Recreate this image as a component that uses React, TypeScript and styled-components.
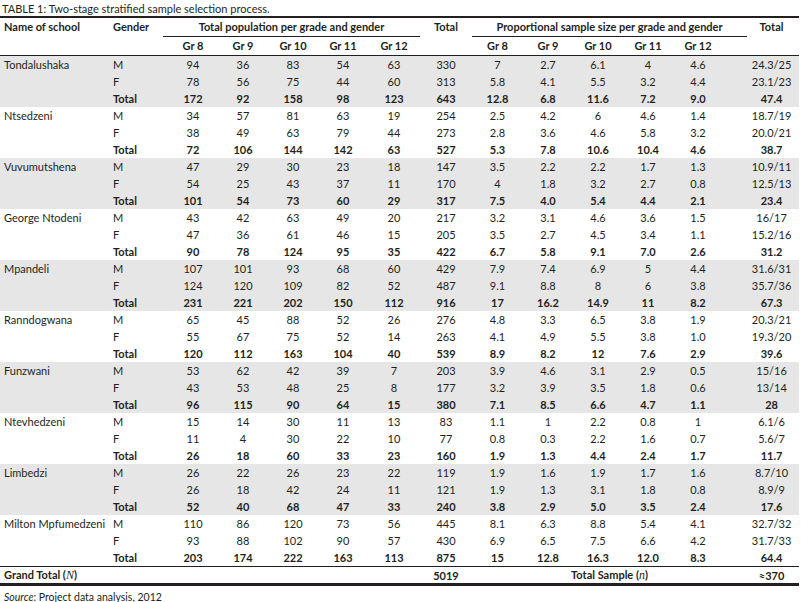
import React from "react";
import styled, { createGlobalStyle } from "styled-components";

const GlobalStyle = createGlobalStyle`
  html, body { margin: 0; padding: 0; background: #ffffff; }
  body { font-family: Lato, "Open Sans", "Liberation Sans", sans-serif; color: #231f20; }
`;

const Page = styled.div`
  width: 803px;
  height: 602px;
  display: flex;
  flex-direction: column;
  box-sizing: border-box;
  padding-top: 2px;
`;

const Caption = styled.div`
  font-size: 11px;
  line-height: 14px;
  padding-left: 2px;
  color: #231f20;
`;

const Table = styled.table`
  width: 799px;
  table-layout: fixed;
  border-collapse: collapse;
  border-top: 2.5px solid #231f20;
  font-size: 11px;
`;

const HeadCell = styled.th<{ $align?: "left" | "center"; $line?: boolean; $pl?: number; $pr?: number }>`
  font-weight: 700;
  text-align: ${(p) => p.$align ?? "center"};
  vertical-align: top;
  padding: 0 ${(p) => p.$pr ?? 0}px 0 ${(p) => p.$pl ?? 0}px;
  height: 17px;
  line-height: 18px;
  border-bottom: ${(p) => (p.$line ? "1px solid #231f20" : "none")};
  white-space: nowrap;
`;

const HeadRow = styled.tr<{ $bottom?: boolean }>`
  border-bottom: ${(p) => (p.$bottom ? "1.5px solid #231f20" : "none")};
`;

const BodyRow = styled.tr<{ $shaded: boolean }>`
  background: ${(p) => (p.$shaded ? "#e6e6e6" : "#ffffff")};
`;

const Cell = styled.td<{ $align?: "left" | "center"; $bold?: boolean; $pl?: number; $pr?: number }>`
  text-align: ${(p) => p.$align ?? "center"};
  font-weight: ${(p) => (p.$bold ? 700 : 400)};
  padding: 0 ${(p) => p.$pr ?? 0}px 0 ${(p) => p.$pl ?? 0}px;
  height: 17px;
  line-height: 17px;
  white-space: nowrap;
  overflow: visible;
`;

const GrandRow = styled.tr`
  border-top: 1.5px solid #231f20;
  border-bottom: 3px solid #231f20;
`;

const GrandCell = styled(Cell)`
  height: 15px;
  line-height: 15px;
`;

const Italic = styled.i`
  font-family: "Liberation Serif", "DejaVu Serif", serif;
  font-weight: 400;
  font-size: 12px;
`;

const Source = styled.div`
  font-size: 10.5px;
  line-height: 12px;
  padding: 5px 0 0 4px;
  color: #231f20;
`;

type Group = { school: string; rows: string[][] };

const groups: Group[] = [
  {
    school: "Tondalushaka",
    rows: [
      ["94", "36", "83", "54", "63", "330", "7", "2.7", "6.1", "4", "4.6", "24.3/25"],
      ["78", "56", "75", "44", "60", "313", "5.8", "4.1", "5.5", "3.2", "4.4", "23.1/23"],
      ["172", "92", "158", "98", "123", "643", "12.8", "6.8", "11.6", "7.2", "9.0", "47.4"],
    ],
  },
  {
    school: "Ntsedzeni",
    rows: [
      ["34", "57", "81", "63", "19", "254", "2.5", "4.2", "6", "4.6", "1.4", "18.7/19"],
      ["38", "49", "63", "79", "44", "273", "2.8", "3.6", "4.6", "5.8", "3.2", "20.0/21"],
      ["72", "106", "144", "142", "63", "527", "5.3", "7.8", "10.6", "10.4", "4.6", "38.7"],
    ],
  },
  {
    school: "Vuvumutshena",
    rows: [
      ["47", "29", "30", "23", "18", "147", "3.5", "2.2", "2.2", "1.7", "1.3", "10.9/11"],
      ["54", "25", "43", "37", "11", "170", "4", "1.8", "3.2", "2.7", "0.8", "12.5/13"],
      ["101", "54", "73", "60", "29", "317", "7.5", "4.0", "5.4", "4.4", "2.1", "23.4"],
    ],
  },
  {
    school: "George Ntodeni",
    rows: [
      ["43", "42", "63", "49", "20", "217", "3.2", "3.1", "4.6", "3.6", "1.5", "16/17"],
      ["47", "36", "61", "46", "15", "205", "3.5", "2.7", "4.5", "3.4", "1.1", "15.2/16"],
      ["90", "78", "124", "95", "35", "422", "6.7", "5.8", "9.1", "7.0", "2.6", "31.2"],
    ],
  },
  {
    school: "Mpandeli",
    rows: [
      ["107", "101", "93", "68", "60", "429", "7.9", "7.4", "6.9", "5", "4.4", "31.6/31"],
      ["124", "120", "109", "82", "52", "487", "9.1", "8.8", "8", "6", "3.8", "35.7/36"],
      ["231", "221", "202", "150", "112", "916", "17", "16.2", "14.9", "11", "8.2", "67.3"],
    ],
  },
  {
    school: "Ranndogwana",
    rows: [
      ["65", "45", "88", "52", "26", "276", "4.8", "3.3", "6.5", "3.8", "1.9", "20.3/21"],
      ["55", "67", "75", "52", "14", "263", "4.1", "4.9", "5.5", "3.8", "1.0", "19.3/20"],
      ["120", "112", "163", "104", "40", "539", "8.9", "8.2", "12", "7.6", "2.9", "39.6"],
    ],
  },
  {
    school: "Funzwani",
    rows: [
      ["53", "62", "42", "39", "7", "203", "3.9", "4.6", "3.1", "2.9", "0.5", "15/16"],
      ["43", "53", "48", "25", "8", "177", "3.2", "3.9", "3.5", "1.8", "0.6", "13/14"],
      ["96", "115", "90", "64", "15", "380", "7.1", "8.5", "6.6", "4.7", "1.1", "28"],
    ],
  },
  {
    school: "Ntevhedzeni",
    rows: [
      ["15", "14", "30", "11", "13", "83", "1.1", "1", "2.2", "0.8", "1", "6.1/6"],
      ["11", "4", "30", "22", "10", "77", "0.8", "0.3", "2.2", "1.6", "0.7", "5.6/7"],
      ["26", "18", "60", "33", "23", "160", "1.9", "1.3", "4.4", "2.4", "1.7", "11.7"],
    ],
  },
  {
    school: "Limbedzi",
    rows: [
      ["26", "22", "26", "23", "22", "119", "1.9", "1.6", "1.9", "1.7", "1.6", "8.7/10"],
      ["26", "18", "42", "24", "11", "121", "1.9", "1.3", "3.1", "1.8", "0.8", "8.9/9"],
      ["52", "40", "68", "47", "33", "240", "3.8", "2.9", "5.0", "3.5", "2.4", "17.6"],
    ],
  },
  {
    school: "Milton Mpfumedzeni",
    rows: [
      ["110", "86", "120", "73", "56", "445", "8.1", "6.3", "8.8", "5.4", "4.1", "32.7/32"],
      ["93", "88", "102", "90", "57", "430", "6.9", "6.5", "7.5", "6.6", "4.2", "31.7/33"],
      ["203", "174", "222", "163", "113", "875", "15", "12.8", "16.3", "12.0", "8.3", "64.4"],
    ],
  },
];

const colWidths = [108, 55, 55, 50, 50, 50, 52, 52, 51, 50, 50, 50, 74, 52];
// per data column (12 columns after name & gender): paddings that centre text like the reference
const padL = [5, 0, 0, 0, 0, 0, 0, 0, 0, 0, 0, 0];
const padR = [0, 0, 0, 0, 0, 0, 0, 0, 0, 0, 24, 3];
const genders = ["M", "F", "Total"];
const grades = ["Gr 8", "Gr 9", "Gr 10", "Gr 11", "Gr 12"];

export default function App() {
  return (
    <>
      <GlobalStyle />
      <Page>
        <Caption>TABLE 1: Two-stage stratified sample selection process.</Caption>
        <Table>
          <colgroup>
            {colWidths.map((w, i) => (
              <col key={i} style={{ width: w }} />
            ))}
          </colgroup>
          <thead>
            <tr>
              <HeadCell $align="left" $pl={4} rowSpan={2}>
                Name of school
              </HeadCell>
              <HeadCell $align="left" $pl={5} rowSpan={2}>
                Gender
              </HeadCell>
              <HeadCell colSpan={5} $line>
                Total population per grade and gender
              </HeadCell>
              <HeadCell rowSpan={2}>Total</HeadCell>
              <HeadCell colSpan={5} $line>
                Proportional sample size per grade and gender
              </HeadCell>
              <HeadCell rowSpan={2} $pr={3}>
                Total
              </HeadCell>
            </tr>
            <HeadRow $bottom>
              {grades.map((g, i) => (
                <HeadCell key={"p" + g} $pl={padL[i]} $pr={padR[i]}>
                  {g}
                </HeadCell>
              ))}
              {grades.map((g, i) => (
                <HeadCell key={"s" + g} $pl={padL[i + 6]} $pr={padR[i + 6]}>
                  {g}
                </HeadCell>
              ))}
            </HeadRow>
          </thead>
          <tbody>
            {groups.map((grp, gi) =>
              grp.rows.map((row, ri) => {
                const isTotal = ri === 2;
                return (
                  <BodyRow key={grp.school + ri} $shaded={gi % 2 === 0}>
                    <Cell $align="left" $pl={4}>
                      {ri === 0 ? grp.school : ""}
                    </Cell>
                    <Cell $align="left" $pl={5} $bold={isTotal}>
                      {genders[ri]}
                    </Cell>
                    {row.map((v, ci) => (
                      <Cell key={ci} $bold={isTotal} $pl={padL[ci]} $pr={padR[ci]}>
                        {v}
                      </Cell>
                    ))}
                  </BodyRow>
                );
              })
            )}
            <GrandRow>
              <GrandCell $align="left" $pl={4} $bold colSpan={2}>
                Grand Total (<Italic>N</Italic>)
              </GrandCell>
              <GrandCell colSpan={5} />
              <GrandCell $bold>5019</GrandCell>
              <GrandCell $bold colSpan={5}>
                Total Sample (<Italic>n</Italic>)
              </GrandCell>
              <GrandCell $bold $pr={3}>
                ≈370
              </GrandCell>
            </GrandRow>
          </tbody>
        </Table>
        <Source>
          <i>Source</i>: Project data analysis, 2012
        </Source>
      </Page>
    </>
  );
}
